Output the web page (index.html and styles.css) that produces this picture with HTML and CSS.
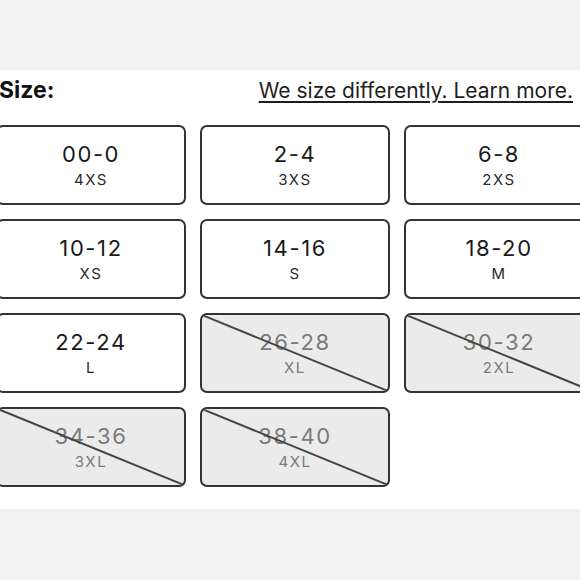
FILE: index.html
```html
<!DOCTYPE html>
<html lang="en">
<head>
<meta charset="utf-8">
<title>Size</title>
<link rel="stylesheet" href="styles.css">
</head>
<body>
<div class="top-band"></div>
<section class="panel">
  <div class="header">
    <span class="title">Size:</span>
    <a class="learn" href="#">We size differently. Learn more.</a>
  </div>
  <div class="grid">
    <div class="size"><span class="num">00-0</span><span class="lbl">4XS</span></div>
    <div class="size"><span class="num">2-4</span><span class="lbl">3XS</span></div>
    <div class="size"><span class="num">6-8</span><span class="lbl">2XS</span></div>
    <div class="size"><span class="num">10-12</span><span class="lbl">XS</span></div>
    <div class="size"><span class="num">14-16</span><span class="lbl">S</span></div>
    <div class="size"><span class="num">18-20</span><span class="lbl">M</span></div>
    <div class="size"><span class="num">22-24</span><span class="lbl">L</span></div>
    <div class="size out"><span class="num">26-28</span><span class="lbl">XL</span><svg class="slash" viewBox="0 0 100 100" preserveAspectRatio="none"><line x1="0" y1="0" x2="100" y2="100" vector-effect="non-scaling-stroke"/></svg></div>
    <div class="size out"><span class="num">30-32</span><span class="lbl">2XL</span><svg class="slash" viewBox="0 0 100 100" preserveAspectRatio="none"><line x1="0" y1="0" x2="100" y2="100" vector-effect="non-scaling-stroke"/></svg></div>
    <div class="size out"><span class="num">34-36</span><span class="lbl">3XL</span><svg class="slash" viewBox="0 0 100 100" preserveAspectRatio="none"><line x1="0" y1="0" x2="100" y2="100" vector-effect="non-scaling-stroke"/></svg></div>
    <div class="size out"><span class="num">38-40</span><span class="lbl">4XL</span><svg class="slash" viewBox="0 0 100 100" preserveAspectRatio="none"><line x1="0" y1="0" x2="100" y2="100" vector-effect="non-scaling-stroke"/></svg></div>
  </div>
</section>
</body>
</html>
```
FILE: styles.css
```css
html, body {
  margin: 0;
  padding: 0;
}
body {
  background: #f1f1f1;
  font-family: Inter, "Noto Sans", sans-serif;
  color: #1c1c1c;
  overflow: hidden;
  width: 580px;
  height: 580px;
}
.top-band {
  height: 70px;
  background: #f2f2f2;
}
.panel {
  background: #ffffff;
  height: 439px;
  overflow: hidden;
}
.header {
  display: flex;
  justify-content: space-between;
  align-items: baseline;
  padding: 6px 7px 0 0;
  height: 49px;
}
.title {
  font-size: 23px;
  font-weight: 700;
  line-height: 28px;
  margin-left: -1px;
  color: #111;
}
.learn {
  font-size: 21px;
  line-height: 28px;
  color: #1e1e1e;
  text-decoration: underline;
  text-underline-offset: 3px;
  text-decoration-thickness: 1.5px;
}
.grid {
  display: grid;
  grid-template-columns: repeat(3, 190px);
  grid-auto-rows: 80px;
  gap: 14px;
  margin-left: -4px;
}
.size {
  position: relative;
  box-sizing: border-box;
  border: 2px solid #333;
  border-radius: 7px;
  background: #fff;
  display: flex;
  flex-direction: column;
  align-items: center;
  justify-content: center;
  gap: 5px;
  padding-top: 1px;
  overflow: hidden;
}
.num {
  font-size: 22px;
  line-height: 24px;
  letter-spacing: 1.6px;
  color: #1a1a1a;
}
.lbl {
  font-size: 15px;
  line-height: 18px;
  letter-spacing: 1.6px;
  color: #2a2a2a;
}
.out {
  background: #ebebeb;
}
.out .num, .out .lbl {
  color: #7a7a7a;
}
.slash {
  position: absolute;
  left: 0;
  top: 0;
  width: 100%;
  height: 100%;
}
.slash line {
  stroke: #444;
  stroke-width: 2;
}
```
